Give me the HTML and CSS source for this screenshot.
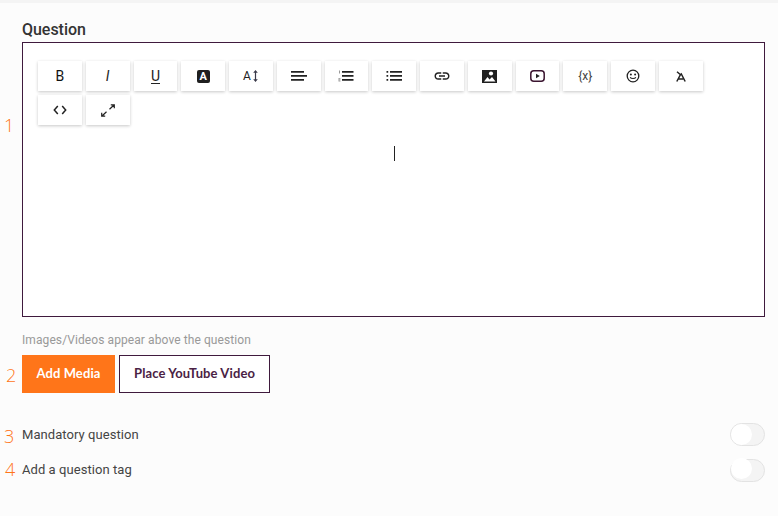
FILE: index.html
```html
<!DOCTYPE html>
<html lang="en">
<head>
<meta charset="utf-8">
<title>Question</title>
<link rel="stylesheet" href="styles.css">
</head>
<body>
<div class="strip"></div>
<main class="form">
  <h2 class="title">Question</h2>
  <section class="editor">
    <div class="toolbar">
      <button class="tool tool-text tool-bold">B</button>
      <button class="tool tool-text tool-italic">I</button>
      <button class="tool tool-text"><span class="under">U</span></button>
      <button class="tool"><span class="boxed-a">A</span></button>
      <button class="tool"><span class="size-a">A</span><svg width="7" height="14" viewBox="0 0 7 14"><path d="M3.500 1 5.800 3.800H4.100v6.400H5.800L3.500 13 1.200 10.200H2.900V3.800H1.200z" fill="#3a3a4a"/></svg></button>
      <button class="tool"><svg width="16" height="12" viewBox="0 0 16 12"><path d="M0 1h13v1.700H0zM0 5h16v1.700H0zM0 9h13v1.700H0z" fill="#222"/></svg></button>
      <button class="tool"><svg width="16" height="12" viewBox="0 0 16 12"><path d="M4 1h11.500v1.700H4zM4 5h11.500v1.700H4zM4 9h11.500v1.700H4z" fill="#222"/><path d="M1 .5h1v3H1zM.5 8h2v.8h-1v.6h1v.8h-1v.6h1v.8h-2z" fill="#999"/></svg></button>
      <button class="tool"><svg width="16" height="12" viewBox="0 0 16 12"><path d="M4 1h12v1.700H4zM4 5h12v1.700H4zM4 9h12v1.700H4zM.5 1h1.700v1.700H.5zM.5 5h1.700v1.700H.5zM.5 9h1.700v1.700H.5z" fill="#222"/></svg></button>
      <button class="tool"><svg width="18" height="18" viewBox="0 0 24 24"><path d="M3.900 12c0-1.710 1.390-3.100 3.100-3.100h4V7H7c-2.760 0-5 2.240-5 5s2.240 5 5 5h4v-1.900H7c-1.710 0-3.100-1.390-3.100-3.100zM8 13h8v-2H8v2zm9-6h-4v1.900h4c1.710 0 3.100 1.390 3.100 3.100s-1.390 3.100-3.100 3.100h-4V17h4c2.760 0 5-2.240 5-5s-2.240-5-5-5z" fill="#222"/></svg></button>
      <button class="tool"><svg width="15" height="13" viewBox="0 0 15 13"><rect width="15" height="13" fill="#1f1f1f"/><circle cx="9" cy="3.500" r="2.100" fill="#fff"/><path d="M2 11.500 5.500 7l2 2.500L10 7l3.500 4.500z" fill="#fff"/></svg></button>
      <button class="tool"><svg width="15" height="12" viewBox="0 0 15 12"><rect x=".8" y=".8" width="13.400" height="10.400" rx="3" fill="none" stroke="#3b1530" stroke-width="1.500"/><path d="M6 3.700v4.600L9.800 6z" fill="#222"/></svg></button>
      <button class="tool tool-var">{x}</button>
      <button class="tool"><svg width="14" height="14" viewBox="0 0 14 14"><circle cx="7" cy="7" r="5.800" fill="none" stroke="#222" stroke-width="1.300"/><circle cx="4.900" cy="5.500" r="1" fill="#222"/><circle cx="9.100" cy="5.500" r="1" fill="#222"/><path d="M4.200 8.300c.7 1.600 4.900 1.600 5.600 0" fill="none" stroke="#222" stroke-width="1.100"/></svg></button>
      <button class="tool"><svg width="10" height="11" viewBox="0 0 10 11"><path d="M.8 10.500 4.300 4l1-1 3.900 7.500M2.800 8h4.400M1 .8l3.800 3.200" fill="none" stroke="#222" stroke-width="1.500"/></svg></button>
      <button class="tool"><svg width="14" height="10" viewBox="0 0 14 10"><path d="M4.800 1 1.300 5l3.500 4M9.200 1l3.500 4-3.500 4" fill="none" stroke="#222" stroke-width="1.500"/></svg></button>
      <button class="tool"><svg width="14" height="13" viewBox="0 0 14 13"><path d="M9.800 .8h3.500v3.500M13 1 8.500 5.200M4.200 12.200H.7V8.700M1 12 5.500 7.800" fill="none" stroke="#222" stroke-width="1.200"/></svg></button>
    </div>
    <div class="editor-body"><span class="caret"></span></div>
  </section>
  <p class="hint">Images/Videos appear above the question</p>
  <div class="actions">
    <button class="btn btn-primary">Add Media</button>
    <button class="btn btn-outline">Place YouTube Video</button>
  </div>
  <div class="option option-first">
    <span>Mandatory question</span>
    <span class="switch"><span class="knob"></span></span>
  </div>
  <div class="option">
    <span>Add a question tag</span>
    <span class="switch"><span class="knob"></span></span>
  </div>
</main>
<span class="mark mark-1">1</span>
<span class="mark mark-2">2</span>
<span class="mark mark-3">3</span>
<span class="mark mark-4">4</span>
</body>
</html>
```
FILE: styles.css
```css
* { box-sizing: border-box; }
html, body { margin: 0; height: 100%; }
body {
  position: relative;
  background: #fcfcfc;
  font-family: Roboto, "Liberation Sans", sans-serif;
  color: #333;
  overflow: hidden;
}
.strip { height: 3px; background: #f4f4f4; }
.form { padding: 17px 13px 0 22px; }
.title {
  margin: 0 0 3px;
  font-size: 16px;
  line-height: 19px;
  font-weight: 500;
  letter-spacing: -.03px;
  color: #333;
}
.editor {
  height: 275px;
  border: 1px solid #3f1a3d;
  background: #fff;
  padding: 18px 15px 0;
}
.toolbar { display: flex; flex-wrap: wrap; gap: 4px; }
.tool {
  width: 43.770px;
  height: 30px;
  padding: 0;
  border: 0;
  background: #fff;
  box-shadow: 0 1px 3px rgba(0, 0, 0, .22);
  display: flex;
  align-items: center;
  justify-content: center;
  color: #222;
  font-family: Roboto, sans-serif;
}
.tool-text { font-size: 14px; font-weight: 400; }
.tool-bold { color: #111; }
.tool-italic { font-style: italic; }
.under { border-bottom: 1px solid #222; line-height: 14px; }
.tool-var { font-size: 12px; color: #444; }
.boxed-a {
  width: 13px;
  height: 13px;
  border-radius: 2px;
  background: #1f1f1f;
  color: #fff;
  font-size: 11px;
  font-weight: 700;
  line-height: 13px;
  text-align: center;
}
.size-a { font-size: 12px; font-weight: 400; margin-right: 1px; }
.editor-body { display: flex; justify-content: center; padding: 21px 0 0 1px; }
.caret { width: 1px; height: 15px; background: #222; }
.hint {
  margin: 16px 0 8px;
  font-size: 12px;
  line-height: 14px;
  letter-spacing: .09px;
  color: #999;
}
.actions { display: flex; gap: 4px; }
.btn {
  height: 38px;
  padding: 0 0 2px;
  font-family: Lato, sans-serif;
  font-size: 13px;
  font-weight: 700;
  letter-spacing: .1px;
}
.btn-primary { width: 93px; background: #ff7519; color: #fff; border: 0; }
.btn-outline { width: 151px; background: #fff; color: #4a2244; border: 1px solid #3f1a3d; }
.option {
  display: flex;
  justify-content: space-between;
  align-items: center;
  height: 23px;
  margin-top: 13px;
  font-size: 13px;
  letter-spacing: .06px;
  color: #444;
}
.option-first { margin-top: 30px; }
.option-first + .option span:first-child { margin-top: -2px; }
.switch {
  width: 35px;
  height: 23px;
  border: 1px solid #e3e3e3;
  border-radius: 12px;
  background: #f4f4f4;
  display: block;
}
.knob {
  display: block;
  width: 21px;
  height: 21px;
  border-radius: 50%;
  background: #fff;
}
.mark {
  position: absolute;
  font-family: "Open Sans", sans-serif;
  font-weight: 300;
  font-size: 18px;
  line-height: 22px;
  color: #ff7519;
}
.mark-1 { left: 4px; top: 114px; }
.mark-2 { left: 6px; top: 364px; }
.mark-3 { left: 4px; top: 425px; }
.mark-4 { left: 5px; top: 458px; }
```
